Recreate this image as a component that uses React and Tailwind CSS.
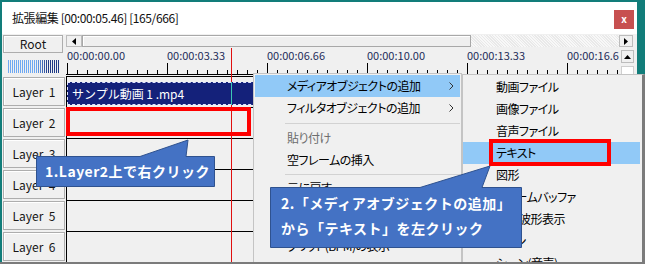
import React from "react";

const jp = "font-['Noto_Sans_CJK_JP',sans-serif]";
const palt = "[font-feature-settings:'palt']";

const times = [
  "00:00:00.00",
  "00:00:03.33",
  "00:00:06.66",
  "00:00:10.00",
  "00:00:13.33",
  "00:00:16.6",
];

const Arrow = ({ dir }) => {
  const pts = { left: "4,0 4,7 0,3.5", right: "0,0 0,7 4,3.5", up: "0,4 7,4 3.5,0" };
  const w = dir === "up" ? 7 : 4;
  const h = dir === "up" ? 4 : 7;
  return (
    <svg width={w} height={h} className="block">
      <polygon points={pts[dir]} fill="#000" />
    </svg>
  );
};

const Ticks = () => {
  const lines = [];
  for (let i = 0; i <= 55; i++) {
    const x = 1.5 + i * 10;
    const major = i % 10 === 0;
    lines.push(
      <line key={i} x1={x} x2={x} y1={major ? 0 : 7} y2={12} stroke="#000" strokeWidth="1" />
    );
  }
  return (
    <svg width="560" height="13" className="block">
      {lines}
      <line x1="0" x2="560" y1="11.5" y2="11.5" stroke="#000" strokeWidth="1.2" />
    </svg>
  );
};

const LayerHead = ({ n }) => (
  <div className="h-[31px] pt-[1px]">
    <div className="ml-[1px] h-[29px] w-[62px] flex items-center justify-center border border-[#adadad] bg-[#f0f0f0] shadow-[inset_1px_1px_0_#ffffff] text-[12px] text-[#161616]">
      {"Layer\u00a0\u00a0" + n}
    </div>
  </div>
);

const MenuItem = ({ label, active, disabled, arrow, sub, tight }) => (
  <div
    className={`h-[22px] flex items-center ${sub ? "pl-[33px] mr-[2px]" : "mx-[1px] pl-[32px]"} pr-[6px] ${
      active ? "bg-[#91c9f7]" : ""
    } ${disabled ? "text-[#6d6d6d]" : "text-black"} ${tight ? "tracking-[-1.5px]" : ""}`}
  >
    <span className="flex-1 whitespace-nowrap">{label}</span>
    {arrow && (
      <svg width="5" height="8" className="block">
        <polyline points="0.5,0.5 4,4 0.5,7.5" fill="none" stroke="#333" strokeWidth="1" />
      </svg>
    )}
  </div>
);

const Sep = ({ h = 8 }) => (
  <div className="flex items-center ml-[31px] mr-[1px]" style={{ height: h }}>
    <div className="h-px w-full bg-[#d2d2d2]" />
  </div>
);

export default function App() {
  return (
    <div className={`relative w-[645px] h-[264px] overflow-hidden bg-[#127d7a] border-b-2 border-[#7b7b7b] pl-[2px] pt-[2px] ${jp}`}>
      <div className="w-[635px] h-full flex flex-col bg-[#f0f0f0]">
        {/* title bar */}
        <div className="h-[32px] shrink-0 bg-white flex justify-between pl-[10px] pr-[3px]">
          <div className="self-center text-[12px] tracking-[-0.4px] text-[#111]">
            拡張編集 [00:00:05.46] [165/666]
          </div>
          <div className="mt-[8px] w-[20px] h-[19px] bg-[#c75050] flex items-center justify-center text-white text-[10px] font-bold leading-none pb-[2px]">
            x
          </div>
        </div>

        <div className="flex flex-1 min-h-0">
          {/* left column */}
          <div className="w-[64px] shrink-0 flex flex-col">
            <div className="mt-[1px] ml-[1px] h-[18px] w-[60px] flex items-center justify-center border border-[#adadad] bg-[#f0f0f0] shadow-[inset_1px_1px_0_#ffffff] text-[12px] text-[#161616]">
              Root
            </div>
            <div className="mt-[7px] ml-[6px] h-[13px] w-[51px] bg-[repeating-linear-gradient(90deg,transparent_0_1px,#f0f0f0_1px_2px),linear-gradient(90deg,#6ea8f2_55%,#1f3a86_78%)]" />
            <div className="mt-[3px]">
              {[1, 2, 3, 4, 5, 6].map((n) => (
                <LayerHead key={n} n={n} />
              ))}
            </div>
          </div>

          {/* timeline */}
          <div className="flex-1 flex flex-col min-w-0">
            <div className="h-[14px] shrink-0 flex items-center pr-[4px]">
              <div className="w-[16px] h-[12px] flex items-center justify-center border border-[#bcbcbc] bg-[#f0f0f0]">
                <Arrow dir="left" />
              </div>
              <div className="w-[389px] h-[12px] border border-[#a8a8a8] bg-[#efefef] shadow-[inset_1px_1px_0_#ffffff]" />
              <div className="flex-1 h-[12px] bg-[repeating-linear-gradient(45deg,#f8f8f8_0_1px,#e9e9e9_1px_2px)]" />
              <div className="w-[14px] h-[12px] flex items-center justify-center border border-[#bcbcbc] bg-[#f0f0f0]">
                <Arrow dir="right" />
              </div>
            </div>

            <div className="flex flex-1 min-h-0">
              <div className="flex-1 min-w-0 overflow-hidden flex flex-col">
                {/* ruler */}
                <div className="h-[28px] shrink-0">
                  <div className="h-[15px] flex items-center pl-[1px] text-[11px] leading-none text-[#1f2d5a] whitespace-nowrap">
                    {times.map((t) => (
                      <div key={t} className="w-[100px] shrink-0">
                        {t}
                      </div>
                    ))}
                  </div>
                  <Ticks />
                </div>
                {/* rows */}
                <div className="border-l border-black">
                  {[1, 2, 3, 4, 5, 6].map((n) => (
                    <div key={n} className="h-[31px] border-t border-black">
                      {n === 1 && (
                        <div className="mt-[5px] h-[23px] w-[320px] bg-[#14217a] border border-dashed border-[#dfe3ff] flex items-center pl-[4px] text-[12px] text-white whitespace-nowrap">
                          サンプル動画 1 .mp4
                        </div>
                      )}
                    </div>
                  ))}
                </div>
              </div>
              <div className="w-[13px] shrink-0 mr-[3px] flex flex-col">
                <div className="mt-[2px] h-[13px] flex items-center justify-center border border-[#bcbcbc] bg-[#f0f0f0]">
                  <Arrow dir="up" />
                </div>
                <div className="mt-[3px] h-[20px] border border-[#cfcfcf] bg-white" />
              </div>
            </div>
          </div>
        </div>
      </div>

      {/* current frame cursor */}
      <div className="absolute left-[231px] top-[48px] bottom-0 w-px bg-[#e01010]" />
      <div className="absolute left-[231px] top-[82px] h-[23px] w-px bg-[#3cc8b4]" />

      {/* red highlight on layer 2 */}
      <div className="absolute left-[66px] top-[107px] w-[185px] h-[29px] border-4 border-[#ff0000]" />

      {/* context menu */}
      <div className={`absolute left-[253px] top-[73px] bottom-0 w-[209px] bg-[#f0f0f0] border-l border-t border-r border-[#c4c4c4] pt-[1px] text-[12px] tracking-[-0.5px] ${palt}`}>
        <MenuItem label="メディアオブジェクトの追加" active arrow />
        <MenuItem label="フィルタオブジェクトの追加" arrow />
        <Sep />
        <MenuItem label="貼り付け" disabled />
        <MenuItem label="空フレームの挿入" />
        <Sep h={6} />
        <MenuItem label="元に戻す" />
        <MenuItem label="レイヤーの挿入" />
        <Sep h={14} />
        <MenuItem label="グリッド(BPM)の表示" />
      </div>

      {/* submenu */}
      <div className={`absolute left-[462px] top-[74px] bottom-0 w-[183px] bg-[#f0f0f0] border-l border-t border-[#c4c4c4] border-r-[3px] border-r-[#7b7b7b] pt-[1px] text-[12px] tracking-[-0.5px] ${palt}`}>
        <MenuItem sub label="動画ファイル" />
        <MenuItem sub label="画像ファイル" />
        <MenuItem sub label="音声ファイル" />
        <MenuItem sub label="テキスト" active />
        <MenuItem sub label="図形" />
        <MenuItem sub label="フレームバッファ" />
        <MenuItem sub label="音声波形表示" />
        <MenuItem sub tight label="シーン" />
        <MenuItem sub label="シーン(音声)" />
      </div>

      {/* red highlight on テキスト */}
      <div className="absolute left-[489px] top-[139px] w-[122px] h-[27px] border-4 border-[#ff0000]" />

      {/* callout 1 */}
      <div className="absolute left-[35px] top-[139px] w-[181px] h-[49px]">
        <svg width="181" height="49" className="absolute inset-0">
          <path d="M1.5,17.5 H105 L153,1 L151,17.5 H179.5 V47.5 H1.5 Z" fill="#4472c4" stroke="#2f528f" strokeWidth="1" />
        </svg>
        <div className="relative mt-[17px] h-[31px] flex items-center pl-[10px] text-[14px] font-bold tracking-[0.5px] text-white whitespace-nowrap">
          1.Layer2上で右クリック
        </div>
      </div>

      {/* callout 2 */}
      <div className="absolute left-[269px] top-[165px] w-[254px] h-[84px]">
        <svg width="254" height="84" className="absolute inset-0">
          <path d="M1.5,22.5 H151 L221,1 L213,22.5 H252.5 V82.5 H1.5 Z" fill="#4472c4" stroke="#2f528f" strokeWidth="1" />
        </svg>
        <div className="relative pt-[26px] pl-[12px] text-[14px] font-bold tracking-[0.5px] text-white whitespace-nowrap">
          <div className="h-[25px] flex items-center">2.「メディアオブジェクトの追加」</div>
          <div className="h-[25px] flex items-center">から「テキスト」を左クリック</div>
        </div>
      </div>
    </div>
  );
}
